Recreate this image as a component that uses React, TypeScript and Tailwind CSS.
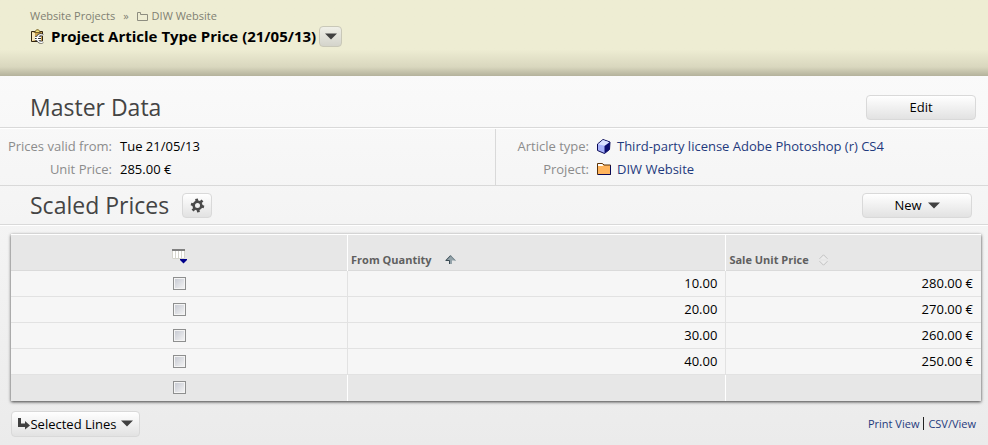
import type { ReactNode } from "react";

const prices = [
  { quantity: "10.00", price: "280.00 €" },
  { quantity: "20.00", price: "270.00 €" },
  { quantity: "30.00", price: "260.00 €" },
  { quantity: "40.00", price: "250.00 €" },
];

const buttonStyle =
  "flex items-center justify-center rounded border border-[#d9d9d9] bg-linear-to-b from-white to-[#e2e2e2] text-black";

export default function App() {
  return (
    <div className="min-h-screen bg-linear-to-b from-[#fdfdfd] to-[#ebebeb] font-['Open_Sans','Noto_Sans',sans-serif] text-[13px] leading-[18px] text-black">
      <PageHeader />
      <main>
        <section>
          <div className="flex h-[52px] items-center justify-between border-b border-[#d9d9d9] pt-[11px] pr-3 pl-[30px]">
            <SectionTitle>Master Data</SectionTitle>
            <button type="button" className={`${buttonStyle} h-[25px] w-[110px]`}>
              Edit
            </button>
          </div>
          <div className="flex border-t border-b border-t-white border-b-[#d9d9d9]">
            <dl className="flex h-14 w-[50.2%] flex-col gap-[5px] border-r border-[#d9d9d9] pt-2">
              <Field label="Prices valid from:">Tue 21/05/13</Field>
              <Field label="Unit Price:">285.00 €</Field>
            </dl>
            <dl className="flex h-14 flex-1 flex-col gap-[5px] pt-2">
              <Field label="Article type:" wide>
                <BoxIcon />
                <a href="#article" className="text-[#1f3a7d]">
                  Third-party license Adobe Photoshop (r) CS4
                </a>
              </Field>
              <Field label="Project:" wide>
                <ProjectIcon />
                <a href="#project" className="text-[#1f3a7d]">
                  DIW Website
                </a>
              </Field>
            </dl>
          </div>
        </section>
        <section>
          <div className="flex h-[39px] items-center justify-between border-b border-[#d9d9d9] pr-4 pl-[30px]">
            <div className="flex items-center gap-[13px]">
              <SectionTitle>Scaled Prices</SectionTitle>
              <button
                type="button"
                aria-label="Settings"
                className={`${buttonStyle} h-[25px] w-[30px]`}
              >
                <GearIcon />
              </button>
            </div>
            <button type="button" className={`${buttonStyle} h-[25px] w-[110px] gap-[6px]`}>
              New
              <Caret />
            </button>
          </div>
          <div className="border-t border-white pt-2 pr-[7px] pl-[11px]">
            <PriceTable />
          </div>
        </section>
        <footer className="flex items-center justify-between pt-[10px] pr-3 pl-[11px]">
          <button type="button" className={`${buttonStyle} h-[26px] w-[129px]`}>
            <ArrowIcon />
            <span className="mr-1">Selected Lines</span>
            <Caret />
          </button>
          <nav className="flex items-center gap-1 text-[11px]">
            <a href="#print" className="text-[#1f3a7d]">
              Print View
            </a>
            <span className="h-[13px] w-px bg-[#222]" />
            <a href="#csv" className="text-[#1f3a7d]">
              CSV/View
            </a>
          </nav>
        </footer>
      </main>
    </div>
  );
}

function PageHeader() {
  return (
    <header className="h-[76px] bg-linear-to-b from-[#eeedd3] from-65% via-[#d9d7be] via-88% to-[#b4b29c] pt-2 pl-[30px]">
      <nav className="flex h-4 items-center text-[11px] text-[#7f7f72]">
        <a href="#projects">Website Projects</a>
        <span className="mx-2">»</span>
        <FolderIcon />
        <a href="#website" className="ml-1">
          DIW Website
        </a>
      </nav>
      <div className="flex h-6 items-center">
        <PriceIcon />
        <h1 className="ml-[6px] text-[15px] font-bold">Project Article Type Price (21/05/13)</h1>
        <button
          type="button"
          aria-label="More actions"
          className="ml-[3px] flex h-[21px] w-[23px] items-center justify-center rounded border border-[#c9c8b8] bg-linear-to-b from-[#f0f0e8] to-[#d4d4cb]"
        >
          <Caret />
        </button>
      </div>
    </header>
  );
}

function SectionTitle({ children }: { children: ReactNode }) {
  return <h2 className="text-[23px] leading-6 text-[#444]">{children}</h2>;
}

function Field({
  label,
  wide,
  children,
}: {
  label: string;
  wide?: boolean;
  children: ReactNode;
}) {
  return (
    <div className="flex">
      <dt className={`${wide ? "w-[93px]" : "w-[112px]"} shrink-0 text-right text-[#8c8c8c]`}>
        {label}
      </dt>
      <dd className="ml-2 flex items-center gap-[6px] whitespace-nowrap">{children}</dd>
    </div>
  );
}

function PriceTable() {
  return (
    <table className="w-full table-fixed border-collapse bg-[#f6f6f6] shadow-[0_1px_3px_rgba(0,0,0,0.75)]">
      <colgroup>
        <col className="w-[34.7%]" />
        <col className="w-[39%]" />
        <col />
      </colgroup>
      <thead className="bg-[#e7e7e7] text-left text-[11px] text-[#5f5f5f]">
        <tr className="h-9 border-t border-b border-t-white border-b-[#dadada]">
          <th className="border-r border-white pt-2">
            <button type="button" aria-label="Choose columns" className="mx-auto block">
              <ColumnsIcon />
            </button>
          </th>
          <th className="border-r border-white pt-[14px] pl-[3px] align-middle">
            <button type="button" className="flex items-center gap-[13px] font-bold">
              From Quantity
              <SortedIcon />
            </button>
          </th>
          <th className="pt-[14px] pl-[3px] align-middle">
            <button type="button" className="flex items-center gap-[10px] font-bold">
              Sale Unit Price
              <UnsortedIcon />
            </button>
          </th>
        </tr>
      </thead>
      <tbody>
        {prices.map((row) => (
          <tr key={row.quantity} className="h-[26px] border-b border-[#e2e2e2]">
            <td className="border-r border-[#e2e2e2]">
              <RowCheckbox label={`Select quantity ${row.quantity}`} />
            </td>
            <td className="border-r border-[#e2e2e2] pr-2 pb-[2px] text-right">{row.quantity}</td>
            <td className="pr-2 pb-[2px] text-right">{row.price}</td>
          </tr>
        ))}
      </tbody>
      <tfoot className="bg-[#e7e7e7]">
        <tr className="h-[26px] border-t border-white">
          <td className="border-r border-white">
            <RowCheckbox label="Select all" />
          </td>
          <td className="border-r border-white" />
          <td />
        </tr>
      </tfoot>
    </table>
  );
}

function RowCheckbox({ label }: { label: string }) {
  return (
    <input
      type="checkbox"
      aria-label={label}
      className="mx-auto block size-[13px] appearance-none border border-[#8e8f8f] bg-linear-to-br from-[#c4c7d0] to-[#f6f6f6] shadow-[inset_0_0_0_1px_#f4f4f4] checked:bg-[#4b5f9a]"
    />
  );
}

function Caret() {
  return (
    <svg width="12" height="7" viewBox="0 0 12 7" fill="#404040" aria-hidden="true">
      <path d="M0 0.5h12L6 6.5z" />
    </svg>
  );
}

function FolderIcon() {
  return (
    <svg width="11" height="9" viewBox="0 0 11 9" fill="none" stroke="#8d8d80" aria-hidden="true">
      <path d="M.5 8.500V.5h3v2h7v6z" />
    </svg>
  );
}

// Clipboard with a euro sign in front of it
function PriceIcon() {
  return (
    <svg width="15" height="15" viewBox="0 0 15 15" aria-hidden="true">
      <path d="M1.500 2.500h11v10h-11z" fill="#cda34e" stroke="#33250f" />
      <path d="M2 3l3 1v7l-3 1z" fill="#f7e9c0" />
      <path d="M4.500 3.500h6L8.500.8h-2z" fill="#f4e27c" stroke="#77612a" />
      <path d="M13 6.200C10 4.800 7.500 6 7.300 9.500c.2 3.500 2.700 4.500 5.700 3.300M5 8.400h6M5 10.600h6" fill="none" stroke="#333" strokeWidth="2.600" />
      <path d="M13 6.200C10 4.800 7.500 6 7.300 9.500c.2 3.500 2.700 4.500 5.700 3.300M5 8.400h6M5 10.600h6" fill="none" stroke="#fff" strokeWidth="1.400" />
    </svg>
  );
}

function BoxIcon() {
  return (
    <svg width="14" height="15" viewBox="0 0 14 15" aria-hidden="true">
      <path d="M6 .5l7 2.500-.5 7.500L7.500 14.500.5 11.500V5z" fill="#a8b2fa" stroke="#0a0a55" />
      <path d="M6 1l6.300 2.200L8 6.800 1 5.200z" fill="#d9e0ff" />
      <path d="M13 3l-.5 7.500-5 4V7z" fill="#0c0c6e" />
    </svg>
  );
}

function ProjectIcon() {
  return (
    <svg width="14" height="12" viewBox="0 0 14 12" aria-hidden="true">
      <path d="M.5 11.500V.5h5l1.500 1.500h6.500v9.500z" fill="#ffb45c" stroke="#5a3208" />
      <path d="M1 3V1h4l1.500 2z" fill="#fff" />
      <path d="M13.500 2.500v9H1" fill="none" stroke="#0a0a55" />
    </svg>
  );
}

function GearIcon() {
  return (
    <svg width="15" height="15" viewBox="0 0 15 15" fill="none" stroke="#4a4a4a" aria-hidden="true">
      <circle cx="7.500" cy="7.500" r="3.800" strokeWidth="2.600" />
      <path d="M6.500.8l.5 2.700M12.500 2.500l-2 1.700M14 9l-2.700-.8M8.500 14.200l-.5-2.700M2.500 12.500l2-1.700M1 6l2.700.8" strokeWidth="2.800" />
    </svg>
  );
}

function ColumnsIcon() {
  return (
    <svg width="15" height="15" viewBox="0 0 15 15" aria-hidden="true">
      <path d="M0 2h13v8H0z" fill="#fff" />
      <path d="M.5 2v7.500h12V2M3.500 2v8M6.500 2v8M9.500 2v8" fill="none" stroke="#d5d5cd" />
      <path d="M0 0h13v2H0z" fill="#808080" />
      <path d="M8 10h7v1l-3.500 3.500L8 11z" fill="#00008b" />
    </svg>
  );
}

function SortedIcon() {
  return (
    <svg width="11" height="9" viewBox="0 0 11 9" aria-hidden="true">
      <path d="M5.500 0L11 5.500H7V9H4V5.500H0z" fill="#94a3aa" />
      <path d="M5.500.7L.9 5.500h3.600V9" fill="none" stroke="#3c4c54" />
      <path d="M5.500.7l4.600 4.800" fill="none" stroke="#6f8088" />
    </svg>
  );
}

function UnsortedIcon() {
  return (
    <svg width="9" height="12" viewBox="0 0 9 12" fill="#ececec" stroke="#c0c0c0" aria-hidden="true">
      <path d="M.5 4.800L4.500.8l4 4" />
      <path d="M.5 7.200l4 4 4-4" />
    </svg>
  );
}

function ArrowIcon() {
  return (
    <svg width="12" height="12" viewBox="0 0 12 12" fill="#404040" aria-hidden="true">
      <path d="M0 0h3v5.500h4V3l5 4.500-5 4V9H0z" />
    </svg>
  );
}
